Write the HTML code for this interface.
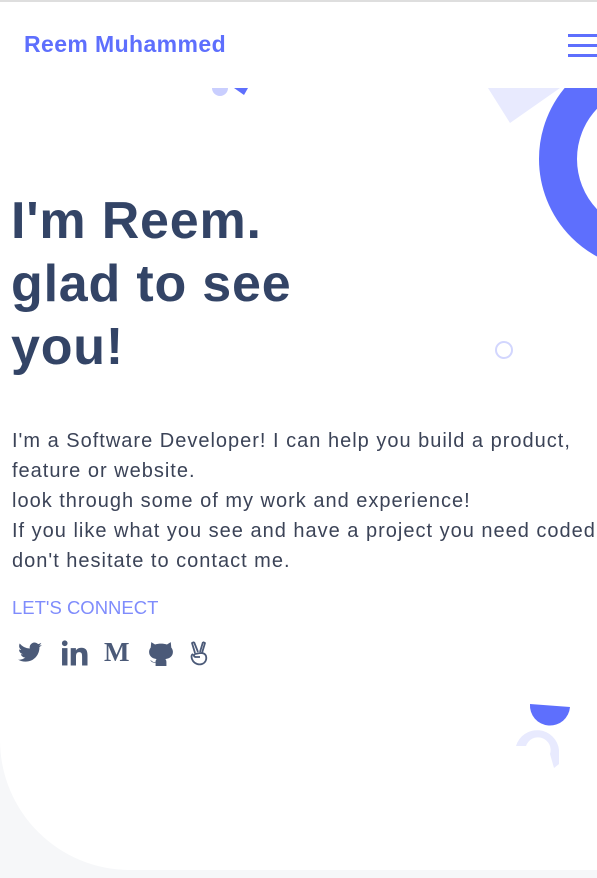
<!DOCTYPE html>
<html><head><style>
html,body{margin:0;padding:0;width:597px;height:878px;overflow:hidden;background:#f6f7f9;font-family:"Liberation Sans",sans-serif}
.top{position:absolute;left:0;top:0;width:597px;height:2px;background:#dedede}
.card{position:absolute;left:0;top:2px;width:597px;height:868px;background:#fff;border-bottom-left-radius:130px;overflow:hidden}
.hdr{position:absolute;left:0;top:0;width:597px;height:86px;background:#fff;z-index:5}
.logo{position:absolute;left:24px;top:29px;font-size:23px;font-weight:bold;color:#5e6ffd;letter-spacing:0.4px}
.bar{position:absolute;left:568px;width:30px;height:3px;background:#5e6ffd}
h1{position:absolute;left:11px;top:188px;margin:0;font-size:52px;line-height:63px;color:#334466;font-weight:bold;letter-spacing:0.8px}
.p{position:absolute;left:12px;top:424px;font-size:20px;line-height:30px;color:#3b4357;white-space:nowrap;letter-spacing:1px}
.lc{position:absolute;left:12px;top:595px;font-size:18.5px;color:#7f8cfc}
.ic{position:absolute;top:636px;font-size:26px;color:#4b5a78;font-weight:bold}
</style></head><body>
<div class="top"></div>
<div class="card">
<div class="hdr"><div class="logo">Reem Muhammed</div>
<div class="bar" style="top:32px"></div><div class="bar" style="top:42px"></div><div class="bar" style="top:52px"></div></div>
<svg style="position:absolute;left:0;top:0" width="597" height="868">
<polygon points="488,86 560,86 510,121" fill="#e8eafe"/>
<circle cx="650" cy="157" r="92" fill="none" stroke="#5e6ffd" stroke-width="38"/>
<circle cx="220" cy="86" r="8" fill="#c9cefe"/>
<polygon points="234,86 248,86 244,93" fill="#5e6ffd"/>
<circle cx="504" cy="348" r="8" fill="none" stroke="#d2d6fe" stroke-width="2"/>
<path d="M530 702 L570 705 A20 20 0 0 1 530 702Z" fill="#5e6ffd"/>
<path d="M516 744 A22 22 0 0 1 559 748 L559 762 L554 766 L550 752 A12 12 0 0 0 526 744Z" fill="#e8eafe"/>
</svg>
<h1>I'm Reem.<br>glad to see<br>you!</h1>
<div class="p">I'm a Software Developer! I can help you build a product,<br>feature or website.<br>look through some of my work and experience!<br>If you like what you see and have a project you need coded,<br>don't hesitate to contact me.</div>
<div class="lc">LET'S CONNECT</div>
<svg style="position:absolute;left:16px;top:638px" width="28" height="26" viewBox="0 0 24 24"><path fill="#4b5a78" d="M23 4.5c-.8.4-1.7.6-2.6.7.9-.6 1.6-1.4 2-2.5-.9.5-1.9.9-2.9 1.1A4.5 4.5 0 0 0 11.8 7.9 12.8 12.8 0 0 1 2.5 3.2a4.5 4.5 0 0 0 1.4 6c-.7 0-1.4-.2-2-.6 0 2.2 1.5 4 3.6 4.4-.7.2-1.4.2-2 .1.6 1.8 2.3 3.1 4.2 3.1A9 9 0 0 1 1 18.1 12.8 12.8 0 0 0 7.9 20c8.3 0 12.8-6.9 12.8-12.8v-.6c.9-.6 1.6-1.4 2.3-2.1z"/></svg>
<svg style="position:absolute;left:61px;top:638px" width="27" height="26" viewBox="0 0 24 24"><circle cx="3" cy="3" r="2.6" fill="#4b5a78"/><rect x="0.5" y="7.5" width="5" height="16" fill="#4b5a78"/><path fill="#4b5a78" d="M8.5 7.5h4.8v2.2c.7-1.3 2.4-2.6 4.9-2.6 5 0 5.8 3.2 5.8 7.4v9h-5v-8c0-1.9 0-4.3-2.6-4.3s-3 2-3 4.2v8.1h-4.9z"/></svg>
<div class="ic" style="left:104px;font-family:'Liberation Serif',serif;font-size:27px;top:635px">M</div>
<svg style="position:absolute;left:148px;top:638px" width="26" height="26" viewBox="0 0 24 24"><path fill="#4b5a78" d="M3 2l3.5 2.2C8.2 3.6 10 3.3 12 3.3s3.8.3 5.5.9L21 2l.5 5c.9 1.1 1.5 2.4 1.5 4 0 4-3 6.2-7 6.6.9.8 1 2 1 3V24H7v-3.2c-2 .5-4-.3-5-2.3 1.2.4 2 1.5 3 1.8 1 .3 2 0 2-.3 0-1 .2-1.8 1-2.4-4-.4-7-2.6-7-6.6 0-1.6.6-2.9 1.5-4z"/></svg>
<svg style="position:absolute;left:189px;top:638px" width="22" height="26" viewBox="0 0 22 26" fill="none" stroke="#4b5a78" stroke-width="1.8" stroke-linejoin="round"><path d="M5 2l4 10M14 2l-3 10M5 2l-2 1 3 10M14 2l2 1-3 10"/><path d="M4 14c-2 1-2 4 0 7 2 3 6 4 9 3 3-1 5-4 4-8-1-3-4-3-6-3l-5 1c-2 1-1 3 1 3h4"/></svg>
</div>
</body></html>
